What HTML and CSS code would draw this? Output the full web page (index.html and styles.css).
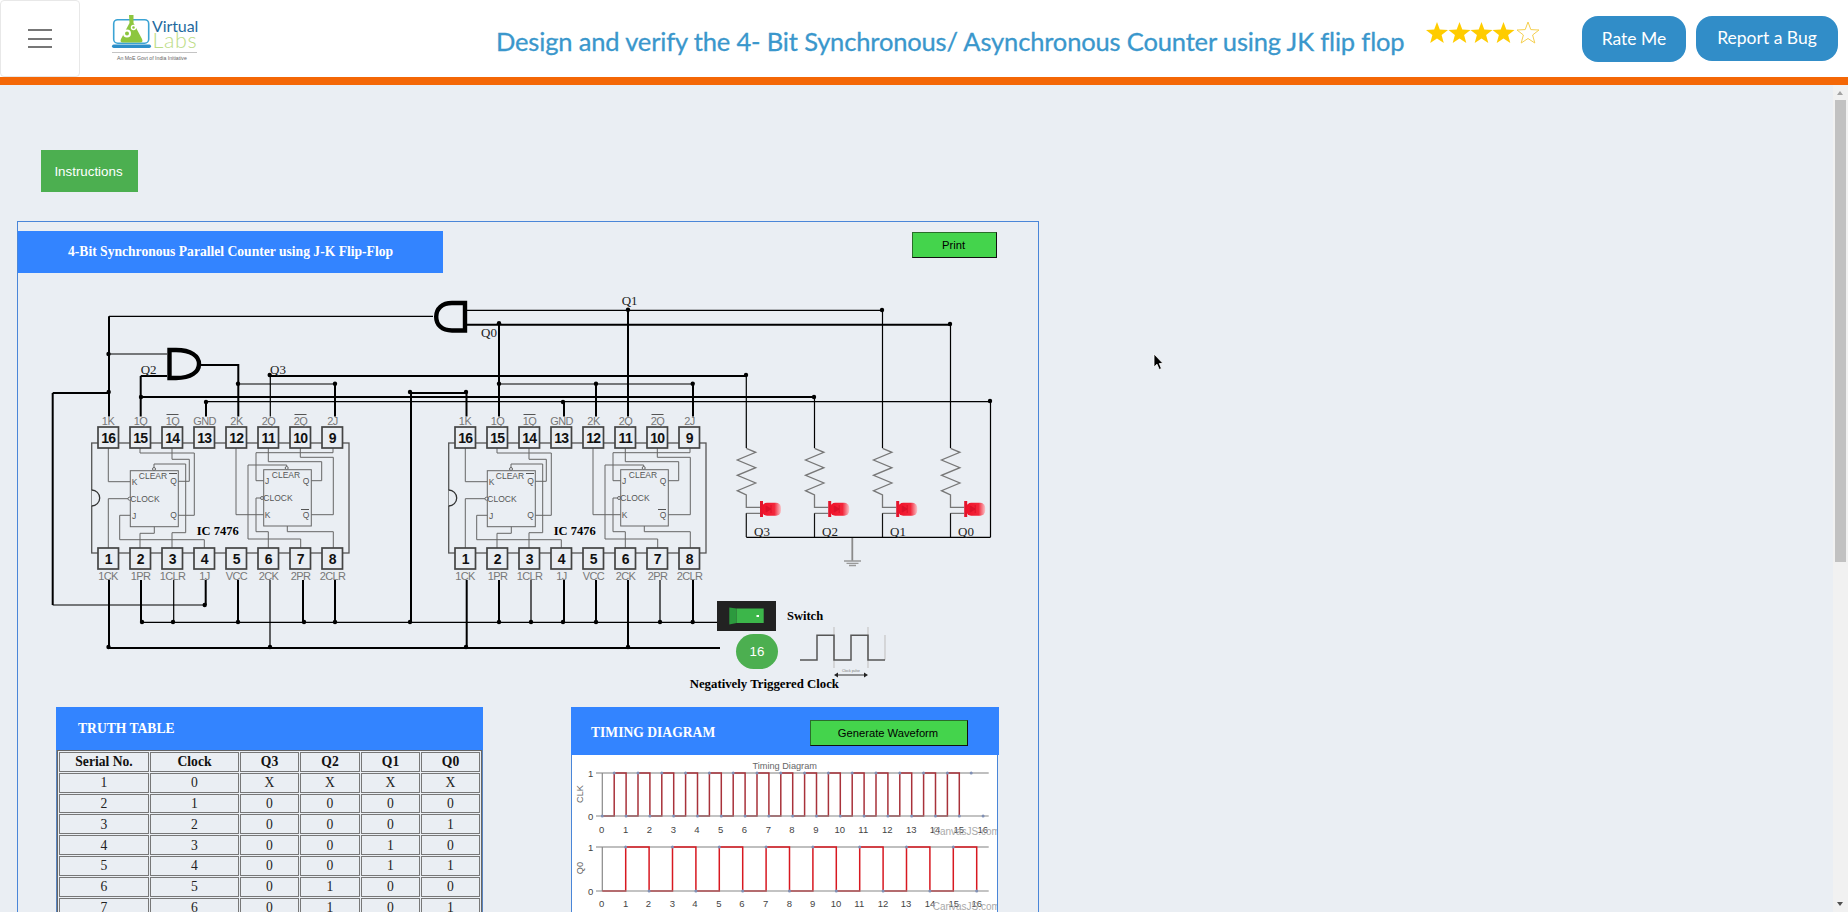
FILE: index.html
```html
<!DOCTYPE html>
<html lang="en">
<head>
<meta charset="utf-8">
<title>4-Bit Synchronous Parallel Counter using J-K Flip-Flop</title>
<link rel="stylesheet" href="styles.css">
</head>
<body>
<header class="topbar">
  <button class="burger" aria-label="Menu"><span></span><span></span><span></span></button>
  <svg class="logo" viewBox="100 5 110 60" width="110" height="60" aria-label="Virtual Labs">
    <rect x="113.7" y="19.7" width="35" height="23.5" rx="4" fill="#fff" stroke="#3ba3d4" stroke-width="1.6"/>
    <path d="M129 15h4.5v8l8.5 16q1.5 3.5-2 3.5h-17q-3.5 0-2-3.5l8.500-16z" fill="#8dc63f"/>
    <circle cx="127" cy="33.500" r="3" fill="none" stroke="#fff" stroke-width="2"/>
    <circle cx="133.500" cy="27.500" r="2" fill="none" stroke="#fff" stroke-width="1.400"/>
    <rect x="112" y="44.500" width="39" height="3.500" rx="1.700" fill="#2d8fc9"/>
    <text x="152" y="32" class="logo-v">Virtual</text>
    <text x="152.500" y="48" class="logo-l">Labs</text>
    <line x1="112" y1="52.500" x2="197" y2="52.500" stroke="#c4c4c4"/>
    <text x="117" y="59.500" class="logo-s">An MoE Govt of India Initiative</text>
  </svg>
  <h1 class="title">Design and verify the 4- Bit Synchronous/ Asynchronous Counter using JK flip flop</h1>
  <svg class="stars" viewBox="0 0 114 22" width="114" height="22" aria-label="4 stars">
    <defs><polygon id="star" points="11,0 13.800,7.600 22,8 15.600,13 17.800,21 11,16.500 4.200,21 6.400,13 0,8 8.200,7.600"/></defs>
    <use href="#star" fill="#fc0"/>
    <use href="#star" x="22.500" fill="#fc0"/>
    <use href="#star" x="44.500" fill="#fc0"/>
    <use href="#star" x="66.500" fill="#fc0"/>
    <use href="#star" x="91" fill="#fff" stroke="#f5cf4e"/>
  </svg>
  <button class="pill pill-rate">Rate Me</button>
  <button class="pill pill-bug">Report a Bug</button>
</header>
<div class="rule"></div>
<div class="viewport">
  <main class="content">
    <button class="instructions">Instructions</button>
    <section class="panel">
      <div class="panel-top">
        <h2 class="panel-title">4-Bit Synchronous Parallel Counter using J-K Flip-Flop</h2>
        <button class="green print">Print</button>
      </div>
      <div class="canvas">
        <svg class="circuit" viewBox="18 273 1020 434" width="1020" height="434">
          <defs>
            <g id="ic">
              <rect x="91.700" y="443" width="257.300" height="110" fill="none" stroke="#555" stroke-width="1.300"/>
              <path d="M91.700 490a8 8 0 0 1 0 16" fill="#e9edf2" stroke="#333" stroke-width="1.300"/>
              <g fill="none" stroke="#666" stroke-width="1">
                <rect x="130.300" y="470.700" width="48" height="56"/>
                <rect x="263.700" y="469.700" width="47.600" height="56.300"/>
                <path d="M108.300 448V481.700H130.300M108.300 548V498.700H128M140 448V453H194.300V515.300H178.300M172 448V459.300H189.300V481.300H178.300M154 468V464H185.700V532.700H172V548M140 548V533.300H154.300V526.700M204.300 548V539.700H119.700V515.300H130.300"/>
                <path d="M236 448V514.700H263.700M333 448V452.700H256V480.700H263.700M268.300 448V461.700H321.700V480.700H311.300M300.300 448V457.300H333.300V514.700H311.300M268.300 548V531.700H256V498H260.500M300.700 548V539H248V465H286.700V468M333.300 548V531.700H287.300V526"/>
                <circle cx="129.500" cy="498.700" r="1.500" fill="#e9edf2"/>
                <circle cx="262" cy="498" r="1.500" fill="#e9edf2"/>
                <circle cx="154" cy="469" r="1.500" fill="#e9edf2"/>
                <circle cx="286.700" cy="468" r="1.500" fill="#e9edf2"/>
                <path d="M166.500 414.500H178.500M294.500 414.500H306.500M169 473.500H177M301 509.500H309" stroke="#555"/>
              </g>
              <g fill="#e9edf2" stroke="#444" stroke-width="1.700">
                <rect x="98" y="427" width="20.500" height="21"/><rect x="130" y="427" width="20.500" height="21"/><rect x="162" y="427" width="20.500" height="21"/><rect x="194" y="427" width="20.500" height="21"/><rect x="226" y="427" width="20.500" height="21"/><rect x="258" y="427" width="20.500" height="21"/><rect x="290" y="427" width="20.500" height="21"/><rect x="322" y="427" width="20.500" height="21"/>
                <rect x="98" y="548" width="20.500" height="21"/><rect x="130" y="548" width="20.500" height="21"/><rect x="162" y="548" width="20.500" height="21"/><rect x="194" y="548" width="20.500" height="21"/><rect x="226" y="548" width="20.500" height="21"/><rect x="258" y="548" width="20.500" height="21"/><rect x="290" y="548" width="20.500" height="21"/><rect x="322" y="548" width="20.500" height="21"/>
              </g>
            </g>
            <g id="resistor">
              <path d="M746.300 448.300L755.700 452.300L737.300 460L755.700 467.700L737.300 475.300L755.700 483L737.300 490.700L746.300 495V507.300H760M746.300 513.300H760" fill="none" stroke="#777" stroke-width="1.300"/>
              <path d="M746.300 513.300V537" stroke="#111" stroke-width="1.200"/>
              <rect x="760" y="501" width="3" height="16" fill="#e3142c"/>
              <rect x="762" y="502.700" width="19" height="13" rx="5" fill="url(#led)"/>
              <path d="M766 506v6l5-3zM771 505v8" stroke="#dc1029" fill="#dc1029"/>
            </g>
            <linearGradient id="led"><stop offset="0" stop-color="#f01028"/><stop offset=".65" stop-color="#f2263a"/><stop offset="1" stop-color="#f9c3c8"/></linearGradient>
          </defs>

          <use href="#ic"/>
          <use href="#ic" x="357"/>

          <g class="ic-text">
            <text class="pl" x="108" y="425">1K</text><text class="pl" x="140.500" y="425">1Q</text><text class="pl" x="172.500" y="425">1Q</text><text class="pl" x="204.500" y="425">GND</text><text class="pl" x="236.500" y="425">2K</text><text class="pl" x="268.500" y="425">2Q</text><text class="pl" x="300.500" y="425">2Q</text><text class="pl" x="332.500" y="425">2J</text>
            <text class="pn" x="108.300" y="443">16</text><text class="pn" x="140.300" y="443">15</text><text class="pn" x="172.300" y="443">14</text><text class="pn" x="204.300" y="443">13</text><text class="pn" x="236.300" y="443">12</text><text class="pn" x="268.300" y="443">11</text><text class="pn" x="300.300" y="443">10</text><text class="pn" x="332.300" y="443">9</text>
            <text class="pn" x="108.300" y="564">1</text><text class="pn" x="140.300" y="564">2</text><text class="pn" x="172.300" y="564">3</text><text class="pn" x="204.300" y="564">4</text><text class="pn" x="236.300" y="564">5</text><text class="pn" x="268.300" y="564">6</text><text class="pn" x="300.300" y="564">7</text><text class="pn" x="332.300" y="564">8</text>
            <text class="pl" x="108" y="580">1CK</text><text class="pl" x="140.500" y="580">1PR</text><text class="pl" x="172.500" y="580">1CLR</text><text class="pl" x="204.500" y="580">1J</text><text class="pl" x="236.500" y="580">VCC</text><text class="pl" x="268.500" y="580">2CK</text><text class="pl" x="300.500" y="580">2PR</text><text class="pl" x="332.500" y="580">2CLR</text>
            <text class="il" x="153" y="479">CLEAR</text><text class="il" x="145" y="502">CLOCK</text><text class="il" x="134.500" y="485">K</text><text class="il" x="134" y="519">J</text><text class="il" x="173.500" y="484">Q</text><text class="il" x="173.500" y="518">Q</text>
            <text class="il" x="286" y="478">CLEAR</text><text class="il" x="278" y="501">CLOCK</text><text class="il" x="267" y="484">J</text><text class="il" x="267.500" y="518">K</text><text class="il" x="306" y="484">Q</text><text class="il" x="306" y="518">Q</text>
            <text class="sb" x="196.700" y="535">IC 7476</text>
          </g>
          <g class="ic-text ic-two">
            <text class="pl" x="108" y="425">1K</text><text class="pl" x="140.500" y="425">1Q</text><text class="pl" x="172.500" y="425">1Q</text><text class="pl" x="204.500" y="425">GND</text><text class="pl" x="236.500" y="425">2K</text><text class="pl" x="268.500" y="425">2Q</text><text class="pl" x="300.500" y="425">2Q</text><text class="pl" x="332.500" y="425">2J</text>
            <text class="pn" x="108.300" y="443">16</text><text class="pn" x="140.300" y="443">15</text><text class="pn" x="172.300" y="443">14</text><text class="pn" x="204.300" y="443">13</text><text class="pn" x="236.300" y="443">12</text><text class="pn" x="268.300" y="443">11</text><text class="pn" x="300.300" y="443">10</text><text class="pn" x="332.300" y="443">9</text>
            <text class="pn" x="108.300" y="564">1</text><text class="pn" x="140.300" y="564">2</text><text class="pn" x="172.300" y="564">3</text><text class="pn" x="204.300" y="564">4</text><text class="pn" x="236.300" y="564">5</text><text class="pn" x="268.300" y="564">6</text><text class="pn" x="300.300" y="564">7</text><text class="pn" x="332.300" y="564">8</text>
            <text class="pl" x="108" y="580">1CK</text><text class="pl" x="140.500" y="580">1PR</text><text class="pl" x="172.500" y="580">1CLR</text><text class="pl" x="204.500" y="580">1J</text><text class="pl" x="236.500" y="580">VCC</text><text class="pl" x="268.500" y="580">2CK</text><text class="pl" x="300.500" y="580">2PR</text><text class="pl" x="332.500" y="580">2CLR</text>
            <text class="il" x="153" y="479">CLEAR</text><text class="il" x="145" y="502">CLOCK</text><text class="il" x="134.500" y="485">K</text><text class="il" x="134" y="519">J</text><text class="il" x="173.500" y="484">Q</text><text class="il" x="173.500" y="518">Q</text>
            <text class="il" x="286" y="478">CLEAR</text><text class="il" x="278" y="501">CLOCK</text><text class="il" x="267" y="484">J</text><text class="il" x="267.500" y="518">K</text><text class="il" x="306" y="484">Q</text><text class="il" x="306" y="518">Q</text>
            <text class="sb" x="196.700" y="535">IC 7476</text>
          </g>

          <use href="#resistor"/>
          <use href="#resistor" x="68.200"/>
          <use href="#resistor" x="136.200"/>
          <use href="#resistor" x="204.200"/>

          <g class="thick">
            <path d="M109 316.300V416.500M52.700 393H108.700M52.700 393V605M205.700 605V580M140.700 376H167M140.700 376V416.500M201 365H238.300V416.500M335 384V416.500M270 376H746M141 397H814M206 402V416.500M411 393H466.500V416.500M411 393V622M467 324.700H950M499 324V416.500M596 384V416.500M693 384V416.500M628 310V416.500M564 402V416.500"/>
            <path d="M109 580V648H720M141 580V622M238 580V622M303 580V622M335 580V622M466.700 580V648M499 580V622M564 580V622M596 580V622M628 580V648M693 580V622"/>
          </g>
          <g class="thin">
            <path d="M109 316.300H433M108.500 354H167M270.300 376V416.500M238 384H335M206 401.700H990.500M990.500 401.700V537.300M746.300 375V448M814.500 397V448M882.500 310V448M950.500 324V448M467 310.300H882M499 384H693M52.700 605H205"/>
            <path d="M142 622.300H717M173.700 580V622M270 580V647M531 580V622M660 580V622M746.300 537.300H990.500"/>
          </g>
          <g fill="none" stroke="#000" stroke-width="4.400">
            <path d="M169.500 350V378H176C191 378 199 372 199 364C199 356 191 350 176 350Z"/>
            <path d="M465 303V330.500H452C442 330.500 436.200 325 436.200 316.700C436.200 308.500 442 303 452 303Z"/>
          </g>
          <g class="dots">
            <circle cx="108.500" cy="354" r="2.200"/><circle cx="108.700" cy="392" r="2.200"/><circle cx="141" cy="397" r="2.200"/><circle cx="238" cy="383.700" r="2.200"/><circle cx="335" cy="383.700" r="2.200"/><circle cx="269.700" cy="375" r="2.200"/><circle cx="206" cy="402" r="2.200"/><circle cx="410" cy="392" r="2.200"/><circle cx="466" cy="392" r="2.200"/><circle cx="499" cy="323.300" r="2.200"/><circle cx="499" cy="383.700" r="2.200"/><circle cx="596" cy="383.700" r="2.200"/><circle cx="692.700" cy="383.700" r="2.200"/><circle cx="628" cy="309.700" r="2.200"/><circle cx="563" cy="402" r="2.200"/><circle cx="882" cy="310" r="2.200"/><circle cx="950" cy="324" r="2.200"/><circle cx="746" cy="375" r="2.200"/><circle cx="814" cy="397" r="2.200"/><circle cx="990" cy="401" r="2.200"/>
            <circle cx="204.700" cy="605" r="2.200"/><circle cx="142" cy="622" r="2.200"/><circle cx="173" cy="622" r="2.200"/><circle cx="238" cy="622" r="2.200"/><circle cx="304" cy="622" r="2.200"/><circle cx="335" cy="622" r="2.200"/><circle cx="410" cy="622" r="2.200"/><circle cx="499" cy="622" r="2.200"/><circle cx="531" cy="622" r="2.200"/><circle cx="563" cy="622" r="2.200"/><circle cx="596" cy="622" r="2.200"/><circle cx="660" cy="622" r="2.200"/><circle cx="692.700" cy="622" r="2.200"/><circle cx="108.500" cy="647" r="2.200"/><circle cx="270" cy="647" r="2.200"/><circle cx="466" cy="647" r="2.200"/><circle cx="628" cy="647" r="2.200"/>
          </g>
          <g class="sl">
            <text x="140.700" y="373.500">Q2</text><text x="270" y="373.500">Q3</text><text x="621.700" y="305">Q1</text><text x="481" y="337">Q0</text>
            <text x="754" y="535.500">Q3</text><text x="822" y="535.500">Q2</text><text x="890" y="535.500">Q1</text><text x="958" y="535.500">Q0</text>
          </g>
          <path d="M852.300 538V561" stroke="#8a8a8a" stroke-width="1.800"/>
          <path d="M844 561H861M846.500 563.300H858.500M849 565.500H856" fill="none" stroke="#999" stroke-width="1.300"/>

          <rect x="717" y="601" width="59" height="30" fill="#222"/>
          <path d="M729.300 607.500L736.500 608.500V623L729.300 624.500Z" fill="#2c9a3e"/>
          <rect x="736.500" y="608.500" width="27.200" height="14.500" fill="#3cb64a"/>
          <rect x="756.500" y="615" width="2.500" height="2" fill="#fff"/>
          <text class="sb" x="787" y="620">Switch</text>

          <path d="M834 627V668M868 627V668M885 635V660" stroke="#c9c9c9" stroke-width="1.300"/>
          <path d="M800 660H817V635.300H834V660H851V635.300H868V660H885" fill="none" stroke="#555" stroke-width="1.500"/>
          <path d="M836 675H866" stroke="#333"/>
          <path d="M834 675l4-2.500v5zM868 675l-4-2.500v5z" fill="#222"/>
          <text class="tiny" x="851" y="672">Clock pulse</text>
          <text class="sb sb-wide" x="689.700" y="688">Negatively Triggered Clock</text>
        </svg>
        <button class="clock">16</button>
      </div>

      <div class="lower">
        <section class="truth">
          <h3 class="truth-head">TRUTH TABLE</h3>
          <table class="tt">
            <thead>
              <tr><th class="c1">Serial No.</th><th class="c2">Clock</th><th class="c3">Q3</th><th class="c4">Q2</th><th class="c3">Q1</th><th class="c3">Q0</th></tr>
            </thead>
            <tbody>
              <tr><td>1</td><td>0</td><td>X</td><td>X</td><td>X</td><td>X</td></tr>
              <tr><td>2</td><td>1</td><td>0</td><td>0</td><td>0</td><td>0</td></tr>
              <tr><td>3</td><td>2</td><td>0</td><td>0</td><td>0</td><td>1</td></tr>
              <tr><td>4</td><td>3</td><td>0</td><td>0</td><td>1</td><td>0</td></tr>
              <tr><td>5</td><td>4</td><td>0</td><td>0</td><td>1</td><td>1</td></tr>
              <tr><td>6</td><td>5</td><td>0</td><td>1</td><td>0</td><td>0</td></tr>
              <tr><td>7</td><td>6</td><td>0</td><td>1</td><td>0</td><td>1</td></tr>
            </tbody>
          </table>
        </section>
        <section class="timing">
          <div class="timing-head">
            <h3 class="timing-title">TIMING DIAGRAM</h3>
            <button class="green gen">Generate Waveform</button>
          </div>
          <div class="chart">
            <svg class="chart-svg" viewBox="572 755 425 200" width="425" height="200">
              <text class="ct" x="784.700" y="769">Timing Diagram</text>
              <text class="yl" transform="translate(583 794) rotate(-90)">CLK</text>
              <path d="M596 773H988.700" stroke="#aaa" stroke-width="1.300"/>
              <path d="M602.300 773V816" stroke="#888" stroke-width="1.200"/>
              <path class="clk" d="M602.300 816h11.900V773h11.900V816h11.900V773h11.900V816h11.900V773h11.900V816h11.900V773h11.900V816h11.900V773h11.900V816h11.900V773h11.900V816h11.900V773h11.900V816h11.900V773h11.900V816h11.900V773h11.900V816h11.900V773h11.900V816h11.900V773h11.900V816h11.900V773h11.900V816h11.900V773h11.900V816h11.900V773h11.900V816h11.900V773h11.900V816"/>
              <path d="M596 816H988.700" stroke="#888" stroke-width="1.200"/>
              <path class="mk" stroke-dasharray="0 23.800" d="M602.300 816H984M614.200 773H984"/>
              <g class="tl">
                <text x="590.700" y="776.500">1</text><text x="590.700" y="819.500">0</text>
                <text x="601.700" y="832.500">0</text><text x="625.700" y="832.500">1</text><text x="649.300" y="832.500">2</text><text x="673.300" y="832.500">3</text><text x="697" y="832.500">4</text><text x="720.700" y="832.500">5</text><text x="744.500" y="832.500">6</text><text x="768.300" y="832.500">7</text><text x="792" y="832.500">8</text><text x="816" y="832.500">9</text><text x="839.700" y="832.500">10</text><text x="863.300" y="832.500">11</text><text x="887.300" y="832.500">12</text><text x="911.300" y="832.500">13</text><text x="935" y="832.500">14</text><text x="958.700" y="832.500">15</text><text x="982.700" y="832.500">16</text>
              </g>
              <text class="wm" x="932.700" y="834.500">CanvasJS.com</text>

              <text class="yl" transform="translate(583 868) rotate(-90)">Q0</text>
              <path d="M596 847H988.700" stroke="#aaa" stroke-width="1.300"/>
              <path d="M602.300 847V891" stroke="#888" stroke-width="1.200"/>
              <path class="q0" d="M602.300 891h23.400V847h23.400V891h23.400V847h23.400V891h23.400V847h23.400V891h23.400V847h23.400V891h23.400V847h23.400V891h23.400V847h23.400V891h23.400V847h23.400V891h23.400V847h23.400V891"/>
              <path d="M596 891H988.700" stroke="#888" stroke-width="1.200"/>
              <path class="mk" stroke-dasharray="0 46.800" d="M625.700 847H977M649.100 891H977"/>
              <g class="tl">
                <text x="590.700" y="850.500">1</text><text x="590.700" y="894.500">0</text>
                <text x="601.700" y="907">0</text><text x="625.700" y="907">1</text><text x="648.300" y="907">2</text><text x="672.300" y="907">3</text><text x="695" y="907">4</text><text x="719" y="907">5</text><text x="742" y="907">6</text><text x="765.700" y="907">7</text><text x="789.300" y="907">8</text><text x="812.700" y="907">9</text><text x="836" y="907">10</text><text x="859.300" y="907">11</text><text x="883" y="907">12</text><text x="906" y="907">13</text><text x="930" y="907">14</text><text x="953.700" y="907">15</text><text x="976.700" y="907">16</text>
              </g>
              <text class="wm" x="932.700" y="909.500">CanvasJS.com</text>
            </svg>
          </div>
        </section>
      </div>
    </section>
  </main>
  <aside class="scrollbar" aria-hidden="true">
    <span class="arrow-up"></span>
    <span class="thumb"></span>
    <span class="arrow-down"></span>
  </aside>
</div>
<svg class="pointer" viewBox="0 0 11 18" width="11" height="18" aria-hidden="true">
  <path d="M1 1V14L4 11.200L6.200 16.500L8.400 15.500L6.300 10.500H10Z" fill="#000" stroke="#fff" stroke-width=".8"/>
</svg>
</body>
</html>
```
FILE: styles.css
```css
* { box-sizing: border-box; }
html, body { margin: 0; height: 912px; overflow: hidden; }
body { position: relative; background: #eaeef3; font-family: "Liberation Serif", serif; color: #111; }
button { cursor: pointer; font-family: "Liberation Sans", sans-serif; }

.topbar { display: flex; align-items: flex-start; height: 77px; background: #fff; padding-right: 10px; }
.burger { width: 80px; height: 77px; flex: none; border: 1px solid #e8e8e8; border-radius: 4px; background: #fff; display: flex; flex-direction: column; align-items: center; justify-content: center; gap: 6.400px; padding: 0; }
.burger span { display: block; width: 24px; height: 2px; background: #777; }
.logo { flex: none; margin: 5px 0 0 20px; }
.logo-v { font: 400 16px Lato, sans-serif; fill: #1f6a9e; letter-spacing: -.1px; }
.logo-l { font: 300 21.500px Lato, sans-serif; fill: #bcdc85; letter-spacing: .6px; }
.logo-s { font: 5.200px "Liberation Sans", sans-serif; fill: #666; }
.title { margin: 24px 0 0 286px; font: 400 25.500px/34px Lato, sans-serif; color: #3a97cc; white-space: nowrap; letter-spacing: -.16px; -webkit-text-stroke: .3px #3a97cc; }
.stars { flex: none; margin: 22px 0 0 auto; overflow: visible; }
.pill { flex: none; height: 46px; margin-top: 16px; border: 0; border-radius: 16px; background: #318dc8; color: #fff; font: 400 17.500px Lato, sans-serif; padding: 0 0 2px; }
.pill-rate { width: 104px; margin-left: 42px; }
.pill-bug { width: 142px; height: 45px; margin-left: 10px; }
.rule { height: 8px; background: #f46706; }

.viewport { display: flex; height: 827px; overflow: hidden; }
.content { flex: 1; min-width: 0; overflow: hidden; padding: 65px 0 0 17px; }
.instructions { display: block; width: 97px; height: 42px; margin-left: 24px; border: 0; background: #4caf50; color: #fff; font-size: 13.330px; padding: 0 2px 0 0; }

.panel { width: 1022px; margin-top: 29px; height: 1000px; border: 1px solid #4a86d8; border-bottom: 0; }
.panel-top { display: flex; align-items: flex-start; justify-content: space-between; padding-top: 9px; height: 51px; }
.panel-title { width: 425px; height: 42px; margin: 0; background: #3384ff; color: #fff; font: 700 13.600px/42px "Liberation Serif", serif; text-align: center; }
.green { background: #44d44c; color: #000; border: 1px solid #111; border-left-color: #2a6d2a; border-top-color: #2a6d2a; font-size: 11.200px; padding: 0 2px 0 0; }
.print { width: 85px; height: 26px; margin: 1px 41px 0 0; }

.canvas { position: relative; height: 434px; }
.circuit { display: block; }
.clock { position: absolute; left: 718px; top: 361px; width: 42px; height: 35px; border: 0; border-radius: 18px; background: #4caf50; color: #fff; font-size: 13.330px; padding: 0; }

.ic-two { transform: translateX(357px); }
.thick { fill: none; stroke: #000; stroke-width: 2; }
.thin { fill: none; stroke: #000; stroke-width: 1.200; }
.dots { fill: #000; }
.pl { font: 11px "Liberation Sans", sans-serif; fill: #777; text-anchor: middle; letter-spacing: -.6px; }
.pn { font: 700 14px "Liberation Sans", sans-serif; fill: #111; text-anchor: middle; letter-spacing: -.7px; }
.il { font: 8.500px "Liberation Sans", sans-serif; fill: #555; text-anchor: middle; }
.sb { font: 700 12.500px "Liberation Serif", serif; fill: #000; }
.sb-wide { font-size: 12.800px; }
.sl { font: 13px "Liberation Serif", serif; fill: #222; }
.tiny { font: 3.500px "Liberation Sans", sans-serif; fill: #777; text-anchor: middle; }

.lower { display: flex; align-items: flex-start; gap: 88px; padding-left: 38px; }
.truth { width: 427px; height: 300px; border-left: 1px solid #5a85c0; border-right: 1px solid #5a85c0; }
.truth-head { height: 43px; margin: 0 -1px; padding-left: 22px; background: #3384ff; color: #fff; font: 700 13.600px/44px "Liberation Serif", serif; }
.tt { table-layout: fixed; width: 425px; border-collapse: separate; border-spacing: 1px; border: 1px solid #666; font-size: 13.600px; color: #222; }
.tt th, .tt td { height: 19.800px; padding: 0; border: 1px solid #777; text-align: center; line-height: 15px; }
.tt th { color: #111; font-weight: 700; }
.c1 { width: 90px; }
.c2 { width: 89px; }
.c3 { width: 59px; }
.c4 { width: 60px; }

.timing { width: 428px; }
.timing-head { display: flex; align-items: flex-start; justify-content: space-between; height: 48px; background: #3384ff; padding: 13px 31px 0 20px; }
.timing-title { margin: 0; color: #fff; font: 700 13.600px/26px "Liberation Serif", serif; }
.gen { width: 158px; height: 26px; }
.chart { width: 427px; height: 300px; background: #fff; border-left: 1px solid #4a86d8; border-right: 1px solid #4a86d8; }
.chart-svg { display: block; }
.ct { font: 9.200px "Liberation Sans", sans-serif; fill: #666; text-anchor: middle; }
.yl { font: 9.200px "Liberation Sans", sans-serif; fill: #666; text-anchor: middle; }
.tl { font: 9.500px "Liberation Sans", sans-serif; fill: #444; text-anchor: middle; }
.wm { font: 10px "Liberation Sans", sans-serif; fill: #aaa; }
.clk { fill: none; stroke: #a8323a; stroke-width: 1.500; }
.q0 { fill: none; stroke: #d81820; stroke-width: 1.500; }
.mk { fill: none; stroke: #7f8fb5; stroke-width: 3; stroke-linecap: round; }

.scrollbar { position: relative; flex: none; width: 15px; background: #f1f1f1; }
.thumb { position: absolute; left: 2px; top: 15px; width: 11px; height: 462px; background: #c1c1c1; }
.arrow-up, .arrow-down { position: absolute; left: 4px; width: 0; height: 0; border-left: 3.500px solid transparent; border-right: 3.500px solid transparent; }
.arrow-up { top: 6px; border-bottom: 4px solid #a3a3a3; }
.arrow-down { bottom: 6px; border-top: 4px solid #505050; }

.pointer { position: absolute; left: 1153px; top: 353px; }
```
